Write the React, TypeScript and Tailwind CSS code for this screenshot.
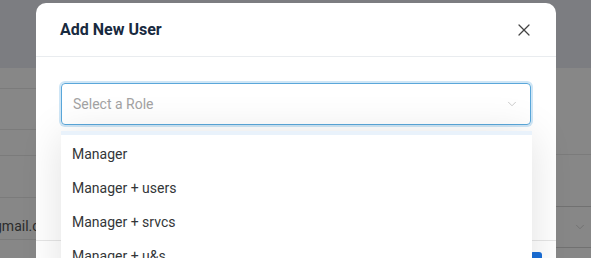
import { X, ChevronDown } from 'lucide-react';

const roles = ['Manager', 'Manager + users', 'Manager + srvcs', 'Manager + u&s'];

const App = () => {
  return (
    <div className="relative h-[258px] w-[591px] overflow-hidden bg-[#878787] font-['Roboto',sans-serif]">
      {/* page behind the overlay */}
      <div className="h-[68px] bg-[#7c7d81]" />
      <div className="flex">
        <div className="w-[36px] flex flex-col">
          <div className="h-[21px] border-b border-[#7b7b7b]" />
          <div className="h-[41px] border-b border-[#7b7b7b]" />
          <div className="h-[26px] border-b border-[#7b7b7b]" />
          <div className="h-[42px] border-b border-[#7b7b7b]" />
          <div className="h-[42px] border-b border-[#7b7b7b] flex items-end pb-[2px] text-[14px] text-[#2b2b2b] -ml-[6px] whitespace-nowrap">
            gmail.com
          </div>
        </div>
        <div className="flex-1" />
        <div className="w-[35px] flex flex-col">
          <div className="h-[87px] border-b border-[#7b7b7b]" />
          <div className="h-[52px] border-b border-[#717171]" />
          <div className="h-[41px] border-b border-[#717171] flex items-center pl-[17px]">
            <ChevronDown className="w-[14px] h-[14px] text-[#6f6f6f]" strokeWidth={1.5} />
          </div>
        </div>
      </div>

      {/* modal */}
      <div className="absolute left-[36px] top-[3px] w-[520px] h-[300px] bg-white rounded-[10px]">
        <div className="flex items-center justify-between h-[54px] px-[24px] border-b border-[#e9ecef]">
          <h2 className="text-[16px] font-bold text-[#182a40] pt-[1px]">Add New User</h2>
          <button className="text-[#444] -mr-[2px]">
            <X className="w-[20px] h-[20px]" strokeWidth={1.5} />
          </button>
        </div>
        <div className="px-[25px] pt-[26px]">
          <div className="flex items-center justify-between h-[42px] w-[470px] rounded-[4px] border border-[#5aa7da] ring-2 ring-[#cfe6f6] px-[11px]">
            <span className="text-[14px] text-[#a3a3a3]">Select a Role</span>
            <ChevronDown className="w-[14px] h-[14px] text-[#c2c2c2]" strokeWidth={1.5} />
          </div>
        </div>
        <div className="absolute left-0 right-0 top-[237px] border-t border-[#e6e6e6]" />
        <div className="absolute left-[494px] top-[249px] w-[12px] h-[20px] rounded-[3px] bg-[#1a6fd9]" />
      </div>

      {/* dropdown menu */}
      <div className="absolute left-[61px] top-[131px] w-[471px] h-[160px] bg-white shadow-[0_4px_40px_rgba(0,0,0,0.12)]">
        <div className="h-[4px] bg-[#e9f2fb]" />
        <ul className="flex flex-col pt-[2px]">
          {roles.map((role) => (
            <li key={role} className="h-[34px] flex items-center px-[11px] text-[14px] text-[#333638]">
              {role}
            </li>
          ))}
        </ul>
      </div>
    </div>
  );
};

export default App;
